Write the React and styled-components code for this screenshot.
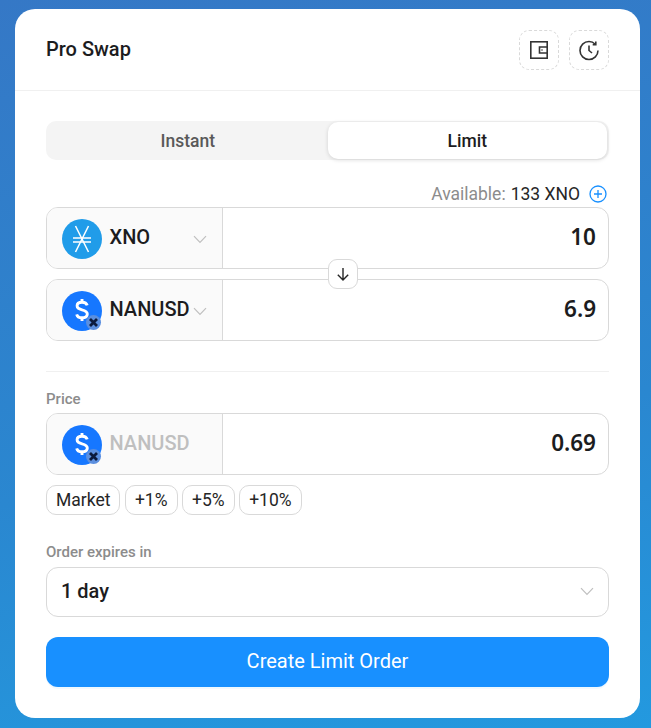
import React from 'react';
import styled, { createGlobalStyle } from 'styled-components';

const GlobalStyle = createGlobalStyle`
  html, body {
    margin: 0;
    padding: 0;
  }
  body {
    font-family: Roboto, "Liberation Sans", sans-serif;
    color: #1c1c1e;
  }
  * {
    box-sizing: border-box;
  }
`;

const Page = styled.div`
  width: 651px;
  height: 728px;
  padding: 9px 11px 10px 15px;
  background: linear-gradient(170deg, #3578c6 0%, #2a87d0 60%, #2399df 100%);
  overflow: hidden;
`;

const Card = styled.div`
  width: 625px;
  height: 709px;
  background: #fff;
  border-radius: 20px;
`;

const Header = styled.div`
  height: 82px;
  padding: 0 31px;
  display: flex;
  align-items: center;
  justify-content: space-between;
  border-bottom: 1px solid #f0f0f0;
`;

const Title = styled.div`
  font-size: 20px;
  font-weight: 500;
  margin-top: -1px;
`;

const HeaderActions = styled.div`
  display: flex;
  gap: 10px;
`;

const DashedButton = styled.div`
  width: 40px;
  height: 40px;
  border: 1px dashed #d9d9d9;
  border-radius: 10px;
  display: flex;
  align-items: center;
  justify-content: center;
  color: #333;
`;

const Body = styled.div`
  padding: 30px 31px 0;
`;

const Tabs = styled.div`
  height: 39px;
  background: #f4f4f4;
  border-radius: 10px;
  display: grid;
  grid-template-columns: 1fr 1fr;
  padding: 1px 2px;
`;

const Tab = styled.div`
  display: flex;
  align-items: center;
  justify-content: center;
  font-size: 17.5px;
  font-weight: 500;
  border-radius: 10px;
  color: ${p => (p.$active ? '#1c1c1e' : '#595959')};
  background: ${p => (p.$active ? '#fff' : 'transparent')};
  box-shadow: ${p => (p.$active ? '0 1px 4px rgba(0,0,0,0.14)' : 'none')};
`;

const Available = styled.div`
  margin-top: 24px;
  height: 19px;
  display: flex;
  justify-content: flex-end;
  align-items: center;
  font-size: 17.5px;
  color: #8c8c8c;
  gap: 5px;
`;

const AvailableValue = styled.span`
  color: #262626;
`;

const PlusIcon = styled.svg`
  margin-left: 4px;
  margin-right: 2px;
`;

const Pair = styled.div`
  position: relative;
  margin-top: 4px;
  display: flex;
  flex-direction: column;
  gap: 10px;
`;

const Field = styled.div`
  height: 62px;
  display: flex;
  border: 1px solid #d9d9d9;
  border-radius: 12px;
  overflow: hidden;
`;

const TokenSide = styled.div`
  width: 176px;
  flex: none;
  background: #fafafa;
  border-right: 1px solid #d9d9d9;
  display: flex;
  align-items: center;
  padding: 2px 15px 0 15px;
`;

const TokenName = styled.div`
  margin: 0 0 4px 7.5px;
  font-size: 20px;
  font-weight: 500;
  flex: 1;
  color: ${p => (p.$muted ? '#bfbfbf' : '#1c1c1e')};
`;

const Amount = styled.div`
  flex: 1;
  text-align: right;
  padding-right: 12px;
  font-family: "Noto Sans", Roboto, sans-serif;
  font-size: 22.5px;
  font-weight: 600;
  line-height: 58px;
`;

const SwapButton = styled.div`
  position: absolute;
  left: 282px;
  top: 52px;
  width: 30px;
  height: 30px;
  background: #fff;
  border: 1px solid #d9d9d9;
  border-radius: 9px;
  display: flex;
  align-items: center;
  justify-content: center;
  color: #262626;
`;

const Divider = styled.div`
  height: 1px;
  background: #f0f0f0;
  margin-top: 30px;
`;

const Label = styled.div`
  font-size: 15px;
  font-weight: 500;
  color: #8c8c8c;
  line-height: 16px;
  margin-top: ${p => p.$top}px;
  margin-bottom: ${p => p.$bottom}px;
`;

const Chips = styled.div`
  display: flex;
  gap: 4.5px;
  margin-top: 10px;
`;

const Chip = styled.div`
  height: 30px;
  padding: 0 9px;
  border: 1px solid #d9d9d9;
  border-radius: 10px;
  display: flex;
  align-items: center;
  font-size: 17.5px;
  color: #262626;
`;

const Select = styled.div`
  height: 50px;
  border: 1px solid #d9d9d9;
  border-radius: 12px;
  display: flex;
  align-items: center;
  justify-content: space-between;
  padding: 0 14px 2px;
  font-size: 20px;
  font-weight: 500;
`;

const SubmitButton = styled.div`
  height: 50px;
  margin-top: 20px;
  padding-bottom: 2px;
  border-radius: 12px;
  background: #1890ff;
  color: #fff;
  display: flex;
  align-items: center;
  justify-content: center;
  font-size: 20px;
  font-weight: 400;
  box-shadow: 0 2px 0 rgba(5, 145, 255, 0.06);
`;

const Chevron = () => (
  <svg width="14" height="14" viewBox="0 0 14 14" fill="none" stroke="#bfbfbf" strokeWidth="1.2">
    <path d="M1 4.2 L7 10.4 L13 4.2" />
  </svg>
);

const WalletIcon = () => (
  <svg width="20" height="20" viewBox="0 0 20 20" fill="none" stroke="currentColor" strokeWidth="1.6">
    <rect x="1.8" y="1.8" width="16.4" height="16.4" />
    <path d="M18 7 H10.5 V13 H18" />
    <circle cx="13" cy="10" r="0.8" fill="currentColor" stroke="none" />
  </svg>
);

const HistoryIcon = () => (
  <svg width="22" height="22" viewBox="0 0 22 22" fill="none" stroke="currentColor" strokeWidth="1.6">
    <path d="M20 11.5 A9 9 0 1 1 11 2.5 C13.5 2.5 15.6 3.5 17.2 5.2" />
    <path d="M17.8 2.6 V5.7 H14.7" />
    <path d="M11 6.5 V11.5 L14 14" />
  </svg>
);

const XnoIcon = () => (
  <svg width="40" height="40" viewBox="0 0 40 40">
    <circle cx="20" cy="20" r="20" fill="#209ce9" />
    <g stroke="#fff" strokeWidth="1.5" fill="none">
      <path d="M13.5 7 L26.5 33" />
      <path d="M26.5 7 L13.5 33" />
      <path d="M11 19 H29" />
      <path d="M11 23 H29" />
    </g>
  </svg>
);

const DollarIcon = () => (
  <svg width="40" height="40" viewBox="0 0 40 40">
    <circle cx="20" cy="20" r="20" fill="#1677ff" />
    <path
      d="M25.2 14.4 C24.6 12.2 22.6 11.2 20 11.2 C17 11.2 15.1 12.6 15.1 14.8 C15.1 17.2 17.2 18.2 20 18.8 C23 19.5 25.3 20.5 25.3 23 C25.3 25.4 23 26.8 20 26.8 C17.4 26.8 15.2 25.6 14.7 23.4"
      fill="none"
      stroke="#fff"
      strokeWidth="2.9"
    />
    <path d="M20 8 V11.5 M20 26.5 V30" stroke="#fff" strokeWidth="2.9" />
    <circle cx="31.5" cy="31.5" r="7.5" fill="#5b8fdf" />
    <path d="M28 28 L35 35 M35 28 L28 35" stroke="#0b1a3d" strokeWidth="2.8" />
  </svg>
);

const TokenIcon = styled.div`
  width: 40px;
  height: 40px;
  flex: none;
  display: flex;
  svg {
    overflow: visible;
  }
`;

export default function App() {
  return (
    <Page>
      <GlobalStyle />
      <Card>
        <Header>
          <Title>Pro Swap</Title>
          <HeaderActions>
            <DashedButton><WalletIcon /></DashedButton>
            <DashedButton><HistoryIcon /></DashedButton>
          </HeaderActions>
        </Header>
        <Body>
          <Tabs>
            <Tab>Instant</Tab>
            <Tab $active>Limit</Tab>
          </Tabs>
          <Available>
            Available: <AvailableValue>133 XNO</AvailableValue>
            <PlusIcon width="18" height="18" viewBox="0 0 18 18" fill="none" stroke="#1890ff" strokeWidth="1.3">
              <circle cx="9" cy="9" r="8" />
              <path d="M9 5 V13 M5 9 H13" />
            </PlusIcon>
          </Available>
          <Pair>
            <Field>
              <TokenSide>
                <TokenIcon><XnoIcon /></TokenIcon>
                <TokenName>XNO</TokenName>
                <Chevron />
              </TokenSide>
              <Amount>10</Amount>
            </Field>
            <Field>
              <TokenSide>
                <TokenIcon><DollarIcon /></TokenIcon>
                <TokenName>NANUSD</TokenName>
                <Chevron />
              </TokenSide>
              <Amount>6.9</Amount>
            </Field>
            <SwapButton>
              <svg width="16" height="16" viewBox="0 0 16 16" fill="none" stroke="currentColor" strokeWidth="1.4">
                <path d="M8 2 V14 M2.8 8.8 L8 14 L13.2 8.8" />
              </svg>
            </SwapButton>
          </Pair>
          <Divider />
          <Label $top={19} $bottom={6}>Price</Label>
          <Field>
            <TokenSide>
              <TokenIcon><DollarIcon /></TokenIcon>
              <TokenName $muted>NANUSD</TokenName>
            </TokenSide>
            <Amount>0.69</Amount>
          </Field>
          <Chips>
            <Chip>Market</Chip>
            <Chip>+1%</Chip>
            <Chip>+5%</Chip>
            <Chip>+10%</Chip>
          </Chips>
          <Label $top={29} $bottom={7}>Order expires in</Label>
          <Select>
            1 day
            <Chevron />
          </Select>
          <SubmitButton>Create Limit Order</SubmitButton>
        </Body>
      </Card>
    </Page>
  );
}
